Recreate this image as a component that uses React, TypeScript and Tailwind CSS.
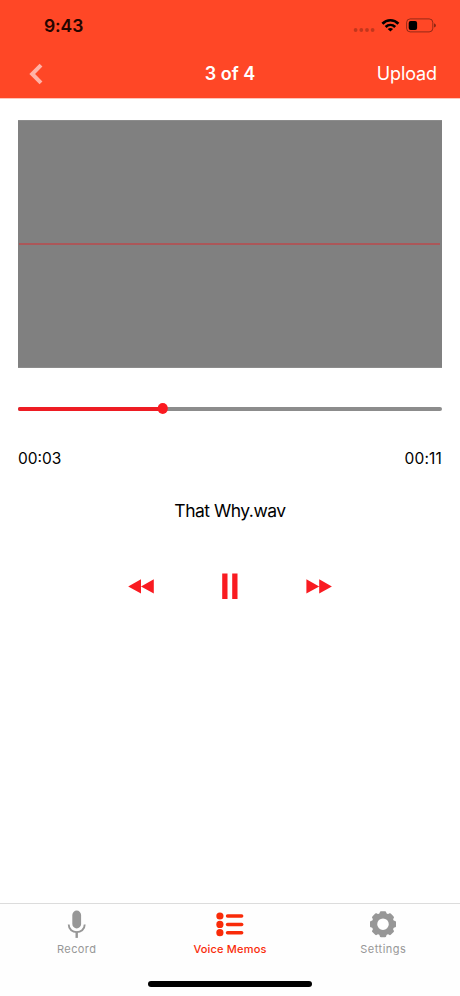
import { useState } from 'react';

type TabName = 'Record' | 'Voice Memos' | 'Settings';

const formatTime = (seconds: number) =>
  `${String(Math.floor(seconds / 60)).padStart(2, '0')}:${String(Math.floor(seconds % 60)).padStart(2, '0')}`;

function StatusIcons() {
  return (
    <svg width="84" height="16" viewBox="0 0 84 16">
      {/* No signal */}
      <g fill="#000" fillOpacity="0.24">
        <circle cx="3.6" cy="12" r="1.9" />
        <circle cx="9.3" cy="12" r="1.9" />
        <circle cx="15" cy="12" r="1.9" />
        <circle cx="20.6" cy="12" r="1.9" />
      </g>
      {/* Wifi */}
      <g fill="none" stroke="#000" strokeWidth="2.7">
        <path d="M30.4 5.7 C34.8 1.1 42 1.1 46.4 5.7" />
        <path d="M33.6 9 C36.4 6.3 40.4 6.3 43.2 9" />
      </g>
      <path d="M38.4 13.6 L35.7 10.9 Q38.4 8.9 41.1 10.9 Z" fill="#000" />
      {/* Battery */}
      <rect x="54.6" y="0.9" width="26.2" height="13" rx="3.6" fill="none" stroke="#000" strokeOpacity="0.42" />
      <rect x="56.7" y="2.9" width="8.4" height="9.1" rx="2" fill="#000" />
      <path d="M82 5.3 Q84 6 84 7.4 Q84 8.9 82 9.6 Z" fill="#000" fillOpacity="0.45" />
    </svg>
  );
}

function MicIcon() {
  return (
    <svg width="28" height="28" viewBox="0 0 28 28">
      <rect x="9.3" y="0.6" width="8.8" height="17.8" rx="4.4" fill="currentColor" />
      <path d="M5.7 14.4 C5.7 24.7 21.7 24.7 21.7 14.4" fill="none" stroke="currentColor" strokeWidth="1.9" />
      <rect x="12.5" y="21.5" width="2.4" height="6.4" fill="currentColor" />
    </svg>
  );
}

function ListIcon() {
  return (
    <svg width="28" height="28" viewBox="0 0 28 28" fill="currentColor">
      {[6, 14.4, 22.7].map(y => (
        <g key={y}>
          <circle cx="3.9" cy={y} r="3.6" />
          <rect x="9.8" y={y - 1.7} width="17.6" height="3.5" rx="1.75" />
        </g>
      ))}
    </svg>
  );
}

function GearIcon() {
  return (
    <svg width="28" height="28" viewBox="0 0 28 28">
      <circle cx="14" cy="14.2" r="8.5" fill="none" stroke="currentColor" strokeWidth="5.4" />
      {[0, 45, 90, 135, 180, 225, 270, 315].map(angle => (
        <path
          key={angle}
          d="M10 5 L10.9 1.9 Q11.1 1.2 12 1.2 H16 Q16.9 1.2 17.1 1.9 L18 5 Z"
          fill="currentColor"
          transform={`rotate(${angle} 14 14.2)`}
        />
      ))}
    </svg>
  );
}

export default function VoiceMemoPlayer() {
  const [activeTab, setActiveTab] = useState<TabName>('Voice Memos');
  const [playing, setPlaying] = useState(true);
  const [position, setPosition] = useState(3.76);
  const duration = 11;

  const tabs = [
    { name: 'Record' as TabName, icon: <MicIcon />, style: 'font-normal tracking-[0.4px]' },
    { name: 'Voice Memos' as TabName, icon: <ListIcon />, style: 'font-medium tracking-[0.18px]' },
    { name: 'Settings' as TabName, icon: <GearIcon />, style: 'font-normal tracking-[0.5px]' }
  ];

  const skip = (seconds: number) => {
    setPosition(Math.min(duration, Math.max(0, position + seconds)));
  };

  const progress = (position / duration) * 100;

  return (
    <div className="flex flex-col w-[460px] h-[996px] overflow-hidden bg-white font-['Inter',sans-serif] text-black">
      {/* Header */}
      <header className="h-[99px] shrink-0 bg-[#ff4726] border-b border-[#ffc4ba]">
        <div className="flex items-center justify-between h-[51px] pl-[44px] pr-[24px]">
          <span className="text-[17.5px] leading-5 font-semibold tracking-[-0.1px] text-[#240500]">9:43</span>
          <StatusIcons />
        </div>
        <div className="grid grid-cols-3 items-center h-[45px] pl-[29px] pr-[23px] text-white">
          <button aria-label="Back" className="w-4">
            <svg width="14" height="22" viewBox="0 0 14 22" fill="none">
              <path d="M12 2.2 L3.2 11 L12 19.8" stroke="#ffb3a8" strokeWidth="4" />
            </svg>
          </button>
          <h1 className="text-center text-[18px] leading-6 font-semibold -ml-1.5">3 of 4</h1>
          <button className="text-right text-[18px] leading-6 tracking-[-0.1px]">Upload</button>
        </div>
      </header>

      <main className="flex-1 px-[18px] pt-[21px]">
        {/* Waveform */}
        <div className="flex items-center h-[248px] bg-[#808080] border-y border-[#8c8c8c]">
          <div className="w-full h-[2px] ml-px mr-0.5 bg-[#ab5759]" />
        </div>

        {/* Seek bar */}
        <div className="relative mt-[39px] h-1 rounded-full bg-[#8c8c8c]">
          <div className="h-1 rounded-full bg-[#ee1c23]" style={{ width: `${progress}%` }} />
          <div
            className="absolute -top-1 size-[10.5px] -translate-x-1/2 rounded-full bg-[#fb1a20]"
            style={{ left: `${progress}%` }}
          />
        </div>
        <div className="flex justify-between mt-[38px] text-[15.5px] leading-5">
          <span>{formatTime(position)}</span>
          <span className="tracking-[0.15px]">{formatTime(duration)}</span>
        </div>

        <p className="mt-[30px] text-center text-[17.5px] leading-6 tracking-[-0.5px]">That Why.wav</p>

        {/* Playback controls */}
        <div className="flex items-center justify-between mt-[49px] mx-[110px] text-[#f91b21]">
          <button aria-label="Rewind" onClick={() => skip(-1)}>
            <svg width="26" height="28" viewBox="0 0 26 28" fill="currentColor">
              <path d="M0.2 14.4 L13 7.2 V21.6 Z M13 14.4 L25.8 7.2 V21.6 Z" />
            </svg>
          </button>
          <button aria-label={playing ? 'Pause' : 'Play'} onClick={() => setPlaying(!playing)}>
            <svg width="28" height="28" viewBox="0 0 28 28" fill="currentColor">
              {playing ? <path d="M6.2 1.4 H11.5 V27 H6.2 Z M16.2 1.4 H21.5 V27 H16.2 Z" /> : <path d="M6 1 L24 14 L6 27 Z" />}
            </svg>
          </button>
          <button aria-label="Fast forward" onClick={() => skip(1)}>
            <svg width="26" height="28" viewBox="0 0 26 28" fill="currentColor">
              <path d="M0.4 7.2 L13.2 14.4 L0.4 21.6 Z M13.2 7.2 L25.9 14.4 L13.2 21.6 Z" />
            </svg>
          </button>
        </div>
      </main>

      {/* Tab bar */}
      <footer className="h-[93px] shrink-0 border-t border-[#dcdcdc] bg-[#fefefe]">
        <nav className="grid grid-cols-3 pt-1.5 h-[77px]">
          {tabs.map(tab => (
            <button
              key={tab.name}
              onClick={() => setActiveTab(tab.name)}
              className={`flex flex-col items-center h-12 ${activeTab === tab.name ? 'text-[#f92b09]' : 'text-[#979797]'}`}
            >
              {tab.icon}
              <span className={`mt-[3px] text-[11px] leading-4 ${tab.style}`}>{tab.name}</span>
            </button>
          ))}
        </nav>
        <div className="w-[164px] h-1.5 mx-auto rounded-full bg-black" />
      </footer>
    </div>
  );
}
